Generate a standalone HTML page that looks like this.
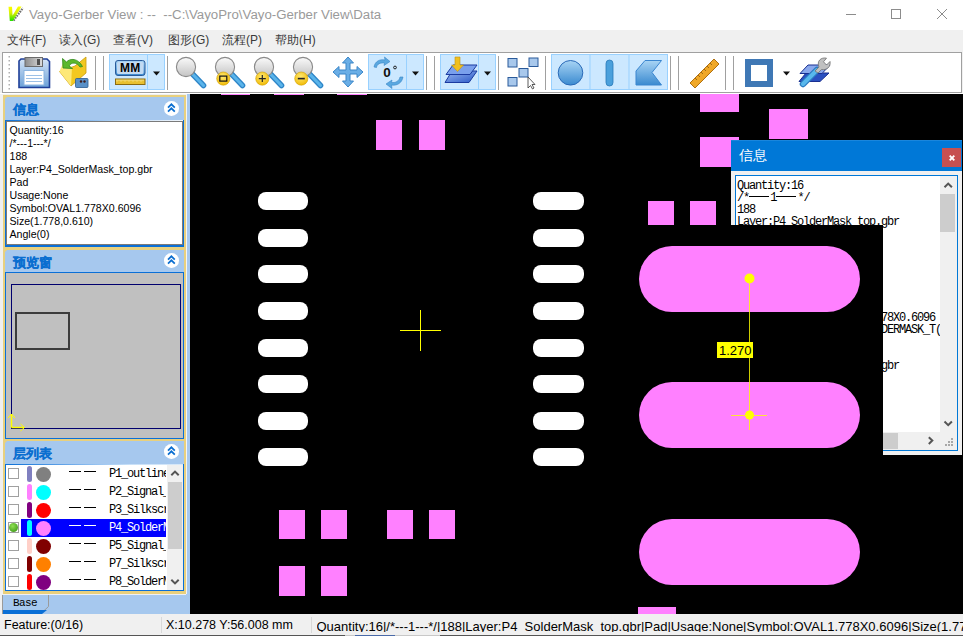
<!DOCTYPE html>
<html><head><meta charset="utf-8">
<style>
*{margin:0;padding:0;box-sizing:border-box}
html,body{width:963px;height:636px;overflow:hidden;background:#f0f0f0;font-family:"Liberation Sans",sans-serif;position:relative}
.a{position:absolute}
#title{left:0;top:0;width:963px;height:30px;background:#fff}
#title .t{left:29px;top:7px;font-size:13.25px;color:#9a9a9a;white-space:pre}
#menu{left:0;top:30px;width:963px;height:21px;background:#f0f0f0}
#menu span{position:absolute;top:2px;font-size:12px;color:#3a3a3a}
#tb{left:2px;top:52px;width:960px;height:41px;background:#fff;border:1px solid #a0a0a0}
#lp{left:0;top:0;width:190px;height:614px}
#canvas{left:190px;top:94px;width:773px;height:520px;background:#000;overflow:hidden}
#status{left:0;top:614px;width:963px;height:22px;background:#f0f0f0}
.pk{position:absolute;background:#ff80ff}
.wo{position:absolute;background:#fff;border-radius:8px;width:51px;height:18px}
.pt{font-family:"Liberation Mono",monospace;font-size:12px;letter-spacing:-1.2px;line-height:12px;color:#000;white-space:pre}
.hd{left:5px;width:179px;background:#a6c8ee;clip-path:polygon(2px 0,100% 0,100% 100%,0 100%,0 2px)}
.hd span{position:absolute;left:7.5px;top:3.5px;font-size:13px;font-weight:bold;color:#0a6ed0;-webkit-text-stroke:0.2px #0a6ed0}
.cb{position:absolute;left:159px;width:14.7px;height:14.7px;border-radius:50%;background:#fff}
.it{font-size:10.6px;line-height:13px;color:#000;white-space:nowrap}
.lt{font-family:"Liberation Mono",monospace;font-size:12px;letter-spacing:-1.2px;line-height:14px;white-space:pre;width:57px;overflow:hidden}
.st{font-size:12.5px;color:#000;white-space:nowrap}
.cap{position:absolute;background:#ff80ff;border-radius:33px;width:221px;height:66px;left:449px}
</style></head><body>
<div id="title" class="a">
  <svg class="a" style="left:4px;top:3px" width="24" height="22" viewBox="4 3 24 22"><defs><linearGradient id="vg" x1="0" y1="0" x2="0" y2="1"><stop offset="0" stop-color="#ffff00"/><stop offset="0.45" stop-color="#d8f000"/><stop offset="1" stop-color="#20e000"/></linearGradient></defs>
<path d="M13.5 20.5 L23 8" stroke="#707070" stroke-width="2.2" stroke-dasharray="1.6 1"/>
<path d="M8.5 6.8 L12 6.8 L12.6 15.5 L18 6.4 L21.5 6.4 L13 21 L9.8 21 Z" fill="url(#vg)"/></svg>
  <div class="a t">Vayo-Gerber View : --  --C:\VayoPro\Vayo-Gerber View\Data</div>
  <svg class="a" style="left:840px;top:4px" width="120" height="22" viewBox="840 4 120 22">
    <g stroke="#8c8c8c" stroke-width="1" fill="none" shape-rendering="crispEdges">
      <line x1="846" y1="14.5" x2="856" y2="14.5"/>
      <rect x="891.5" y="9.5" width="9" height="9"/>
    </g>
    <g stroke="#8c8c8c" stroke-width="1" fill="none">
      <line x1="937" y1="9" x2="947" y2="19"/><line x1="947" y1="9" x2="937" y2="19"/>
    </g>
  </svg>
</div>
<div id="menu" class="a">
  <span style="left:7px">文件(F)</span>
  <span style="left:59px">读入(G)</span>
  <span style="left:113px">查看(V)</span>
  <span style="left:168px">图形(G)</span>
  <span style="left:222px">流程(P)</span>
  <span style="left:275px">帮助(H)</span>
</div>
<div id="tb" class="a"></div>
<svg class="a" style="left:0;top:50px" width="963" height="44" viewBox="0 50 963 44">
<defs>
 <linearGradient id="lens" x1="0" y1="0" x2="0" y2="1"><stop offset="0" stop-color="#fafafa"/><stop offset="1" stop-color="#c4c4c4"/></linearGradient>
 <radialGradient id="badge" cx="0.45" cy="0.35" r="0.7"><stop offset="0" stop-color="#ffe870"/><stop offset="1" stop-color="#f0b800"/></radialGradient>
 <linearGradient id="fl" x1="0" y1="0" x2="0" y2="1"><stop offset="0" stop-color="#d4e4f6"/><stop offset="1" stop-color="#6aa0d8"/></linearGradient>
 <linearGradient id="sh" x1="0" y1="0" x2="1" y2="0"><stop offset="0" stop-color="#8c8c8c"/><stop offset="1" stop-color="#dcdcdc"/></linearGradient>
 <linearGradient id="blu" x1="0" y1="0" x2="0" y2="1"><stop offset="0" stop-color="#a8d4f4"/><stop offset="1" stop-color="#3a8ad0"/></linearGradient>
 <linearGradient id="lay" x1="0" y1="0" x2="1" y2="1"><stop offset="0" stop-color="#9ab8f0"/><stop offset="1" stop-color="#2a58c8"/></linearGradient>
</defs>
<rect x="8.5" y="56" width="1.5" height="1.5" fill="#b0b0b0"/><rect x="8.5" y="60" width="1.5" height="1.5" fill="#b0b0b0"/><rect x="8.5" y="64" width="1.5" height="1.5" fill="#b0b0b0"/><rect x="8.5" y="68" width="1.5" height="1.5" fill="#b0b0b0"/><rect x="8.5" y="72" width="1.5" height="1.5" fill="#b0b0b0"/><rect x="8.5" y="76" width="1.5" height="1.5" fill="#b0b0b0"/><rect x="8.5" y="80" width="1.5" height="1.5" fill="#b0b0b0"/><rect x="8.5" y="84" width="1.5" height="1.5" fill="#b0b0b0"/><rect x="8.5" y="88" width="1.5" height="1.5" fill="#b0b0b0"/>
<!-- floppy -->
<path d="M21 59 H47 L49.5 61.5 V87.5 H19 V61 Z" fill="url(#fl)" stroke="#1f3f98" stroke-width="1.6"/>
<rect x="25" y="57.5" width="17.5" height="9" fill="url(#sh)" stroke="#6a6a6a" stroke-width="1"/>
<rect x="37" y="59" width="3" height="6" fill="#505050"/>
<rect x="24" y="70.5" width="20" height="14.5" fill="#fff" stroke="#8ab4e0" stroke-width="1"/>
<path d="M26 75.5 H42 M26 78.5 H42 M26 81.5 H42" stroke="#9cc0e6" stroke-width="1"/>
<!-- folder -->
<path d="M59.5 71.5 L71 86 L86 73 V57 L75 66 Z" fill="#f3c820" stroke="#c89a10" stroke-width="0.8"/>
<path d="M59.5 71.5 L71 86 L72 67 L63 63 Z" fill="#fde878"/>
<path d="M62.5 58.5 L63 68 L72.5 68.5 L69 66 C71 62 77 62 80 67 L82.5 66.5 C78 58 70 58 66.5 62 Z" fill="#5cb82c" stroke="#2e8a1a" stroke-width="0.8"/>
<rect x="75.5" y="78.5" width="12.5" height="9" rx="1" fill="#5890c8" stroke="#2a5a90" stroke-width="0.8"/>
<circle cx="81" cy="81.5" r="1.2" fill="#402020"/><circle cx="84.5" cy="81.5" r="1.2" fill="#402020"/>
<line x1="95.5" y1="56" x2="95.5" y2="90" stroke="#a0a0a0" stroke-width="1"/><line x1="103.5" y1="56" x2="103.5" y2="90" stroke="#a0a0a0" stroke-width="1"/><line x1="167.5" y1="56" x2="167.5" y2="90" stroke="#a0a0a0" stroke-width="1"/><line x1="426.5" y1="56" x2="426.5" y2="90" stroke="#a0a0a0" stroke-width="1"/><line x1="434.5" y1="56" x2="434.5" y2="90" stroke="#a0a0a0" stroke-width="1"/><line x1="498.5" y1="56" x2="498.5" y2="90" stroke="#a0a0a0" stroke-width="1"/><line x1="545.5" y1="56" x2="545.5" y2="90" stroke="#a0a0a0" stroke-width="1"/><line x1="670.5" y1="56" x2="670.5" y2="90" stroke="#a0a0a0" stroke-width="1"/><line x1="678.5" y1="56" x2="678.5" y2="90" stroke="#a0a0a0" stroke-width="1"/><line x1="725.5" y1="56" x2="725.5" y2="90" stroke="#a0a0a0" stroke-width="1"/><line x1="733.5" y1="56" x2="733.5" y2="90" stroke="#a0a0a0" stroke-width="1"/>
<!-- MM button -->
<rect x="109.5" y="54.5" width="55" height="35" fill="#cce8ff" stroke="#99d1ff" stroke-width="1"/><line x1="147.5" y1="55" x2="147.5" y2="89" stroke="#99d1ff" stroke-width="1"/>
<rect x="115.5" y="60.5" width="29.5" height="15" rx="2.5" fill="url(#blu)" stroke="#2a5a9a" stroke-width="1"/>
<rect x="117" y="62" width="26.5" height="12" rx="1.5" fill="#c4daf2"/>
<text x="130.2" y="72.2" font-family="Liberation Sans" font-weight="bold" font-size="12" letter-spacing="0.3" text-anchor="middle" fill="#000">MM</text>
<rect x="115.5" y="79" width="29.5" height="5.5" fill="#e8c030" stroke="#8a6a10" stroke-width="1"/>
<path d="M117 79.5 V81.5 M119 79.5 V80.8 M121 79.5 V81.5 M123 79.5 V80.8 M125 79.5 V81.5 M127 79.5 V80.8 M129 79.5 V81.5 M131 79.5 V80.8 M133 79.5 V81.5 M135 79.5 V80.8 M137 79.5 V81.5 M139 79.5 V80.8 M141 79.5 V81.5 M143 79.5 V80.8" stroke="#fff4c0" stroke-width="0.8"/>
<path d="M153 71.5 H160 L156.5 75.5 Z" fill="#111"/>
<!-- magnifiers -->
<path d="M192.5 74 L203.5 85.5" stroke="#2f86c8" stroke-width="5.6" stroke-linecap="round"/>
<path d="M192.5 74 L203.5 85.5" stroke="#5ab4ea" stroke-width="3" stroke-linecap="round"/>
<circle cx="186" cy="67" r="9.6" fill="url(#lens)" stroke="#8a8a8a" stroke-width="1.1"/>
<path d="M231.5 74 L242.5 85.5" stroke="#2f86c8" stroke-width="5.6" stroke-linecap="round"/>
<path d="M231.5 74 L242.5 85.5" stroke="#5ab4ea" stroke-width="3" stroke-linecap="round"/>
<circle cx="225" cy="67" r="9.6" fill="url(#lens)" stroke="#8a8a8a" stroke-width="1.1"/><circle cx="223.3" cy="78.6" r="6.6" fill="url(#badge)" stroke="#d0a000" stroke-width="0.6"/><rect x="219.8" y="76.1" width="7" height="5" fill="none" stroke="#111" stroke-width="1.2"/>
<path d="M270.5 74 L281.5 85.5" stroke="#2f86c8" stroke-width="5.6" stroke-linecap="round"/>
<path d="M270.5 74 L281.5 85.5" stroke="#5ab4ea" stroke-width="3" stroke-linecap="round"/>
<circle cx="264" cy="67" r="9.6" fill="url(#lens)" stroke="#8a8a8a" stroke-width="1.1"/><circle cx="262.3" cy="78.6" r="6.6" fill="url(#badge)" stroke="#d0a000" stroke-width="0.6"/><path d="M258.8 78.6 H265.8 M262.3 75.1 V82.1" stroke="#222" stroke-width="1.2"/>
<path d="M309.5 74 L320.5 85.5" stroke="#2f86c8" stroke-width="5.6" stroke-linecap="round"/>
<path d="M309.5 74 L320.5 85.5" stroke="#5ab4ea" stroke-width="3" stroke-linecap="round"/>
<circle cx="303" cy="67" r="9.6" fill="url(#lens)" stroke="#8a8a8a" stroke-width="1.1"/><circle cx="301.3" cy="78.6" r="6.6" fill="url(#badge)" stroke="#d0a000" stroke-width="0.6"/><path d="M297.8 78.6 H304.8" stroke="#222" stroke-width="1.6"/>
<!-- move -->
<path d="M348.0 57.0 L353.5 63.0 L350.0 63.0 L350.0 70.0 L357.0 70.0 L357.0 66.5 L363.0 72.0 L357.0 77.5 L357.0 74.0 L350.0 74.0 L350.0 81.0 L353.5 81.0 L348.0 87.0 L342.5 81.0 L346.0 81.0 L346.0 74.0 L339.0 74.0 L339.0 77.5 L333.0 72.0 L339.0 66.5 L339.0 70.0 L346.0 70.0 L346.0 63.0 L342.5 63.0 Z" fill="#6aaee6" stroke="#3a86c8" stroke-width="1" stroke-linejoin="round"/>
<!-- rotate -->
<rect x="368.5" y="54.5" width="55" height="35" fill="#cce8ff" stroke="#99d1ff" stroke-width="1"/><line x1="406.5" y1="55" x2="406.5" y2="89" stroke="#99d1ff" stroke-width="1"/>
<path d="M374 67 C375 61 380 59 385 60 L384.5 57 L390 61.5 L384 65.5 L384.5 63 C380 62.5 377 64 376.5 67.5 Z" fill="#5aa8e0" stroke="#3a86c8" stroke-width="0.6"/>
<path d="M403 77 C402 83 397 86 391.5 85 L392 88.5 L386 84 L392 80 L391.5 82.5 C396 83 399 81 400 77 Z" fill="#5aa8e0" stroke="#3a86c8" stroke-width="0.6"/>
<text x="383.2" y="76.8" font-family="Liberation Sans" font-weight="bold" font-size="13.5" fill="#111">0</text>
<circle cx="395" cy="67.5" r="1.4" fill="none" stroke="#111" stroke-width="0.9"/>
<path d="M412 71.5 H419 L415.5 75.5 Z" fill="#111"/>
<!-- layer -->
<rect x="440.5" y="54.5" width="55" height="35" fill="#cce8ff" stroke="#99d1ff" stroke-width="1"/><line x1="478.5" y1="55" x2="478.5" y2="89" stroke="#99d1ff" stroke-width="1"/>
<path d="M452 71 H477 L469 82.5 H445 Z" fill="url(#lay)" stroke="#1a3aa0" stroke-width="1"/>
<path d="M453 65 H477 L470 74.5 H446 Z" fill="#7aa0ec" stroke="#1a3aa0" stroke-width="1"/>
<path d="M455 57 H460 V65 H463.5 L457.5 71.5 L451.5 65 H455 Z" fill="#f0c020" stroke="#c09010" stroke-width="0.6"/>
<path d="M484 71.5 H491 L487.5 75.5 Z" fill="#111"/>
<!-- select -->
<rect x="508" y="58.5" width="9" height="8.5" fill="#a8c8ec" stroke="#2a5a9a" stroke-width="1"/>
<rect x="529" y="58" width="9" height="8.5" fill="#a8c8ec" stroke="#2a5a9a" stroke-width="1"/>
<rect x="519" y="68.5" width="9" height="8.5" fill="#a8c8ec" stroke="#2a5a9a" stroke-width="1"/>
<rect x="508" y="77.5" width="9" height="8.5" fill="#a8c8ec" stroke="#2a5a9a" stroke-width="1"/>
<path d="M528 77 V88 L530.5 85.5 L532.5 89 L534 88 L532 84.5 L535 84.5 Z" fill="#fff" stroke="#333" stroke-width="0.8"/>
<!-- shape buttons -->
<rect x="551.5" y="54.5" width="116" height="35" fill="#cce8ff" stroke="#99d1ff" stroke-width="1"/><line x1="590" y1="55" x2="590" y2="89" stroke="#99d1ff" stroke-width="1"/><line x1="629" y1="55" x2="629" y2="89" stroke="#99d1ff" stroke-width="1"/>
<circle cx="570.5" cy="72.8" r="12.3" fill="url(#blu)" stroke="#2a6ab8" stroke-width="1"/>
<rect x="606" y="60" width="7" height="26" rx="3.5" fill="#4aa0dc" stroke="#2a78b8" stroke-width="0.8"/>
<path d="M645 60.5 H661.5 L652 72.5 L661.5 85 H636 V71 Z" fill="url(#blu)" stroke="#3a86d0" stroke-width="1"/>
<!-- ruler -->
<path d="M690 83 L714 59 L719 64 L695 88 Z" fill="#f0a828" stroke="#b07010" stroke-width="1"/>
<path d="M698 75 L700 77 M701 72 L703 74 M704 69 L706 71 M707 66 L709 68 M710 63 L712 65 M695 78 L697 80" stroke="#8a5a10" stroke-width="0.8"/>
<!-- square -->
<rect x="748" y="62" width="22" height="22" fill="none" stroke="#3f78b5" stroke-width="6"/>
<path d="M783 71.5 H790 L786.5 75.5 Z" fill="#111"/>
<!-- wrench layers -->
<path d="M806 73 H829 L820 81.5 H799 Z" fill="#2a50c0" stroke="#1a3090" stroke-width="1"/>
<path d="M808 65 H830 L822 73.5 H800 Z" fill="#8aa8ec" stroke="#1a3090" stroke-width="1"/>
<path d="M803 84 L817 70" stroke="#2a7ac0" stroke-width="6.5" stroke-linecap="round"/>
<path d="M803 84 L817 70" stroke="#58b8ec" stroke-width="4" stroke-linecap="round"/>
<path d="M815 71 L819 67 C816.5 61 821 57 826.5 58.2 L823.5 61.8 L826.5 65 L830 61.5 C831 67 826.5 70.5 821.5 69.5 L818 73 Z" fill="#c0c0c0" stroke="#7a7a7a" stroke-width="0.9"/>
</svg>
<div class="a" style="left:0;top:93px;width:963px;height:1px;background:#fff"></div>
<div id="lp" class="a">
  <div class="a" style="left:3px;top:95px;width:183px;height:499px;background:#e8d07e"></div>
  <div class="a" style="left:186px;top:94px;width:1px;height:520px;background:#f4f4f4"></div>
  <div class="a" style="left:187px;top:94px;width:3px;height:520px;background:#a6c8ee"></div>
  <!-- info section -->
  <div class="a hd" style="top:97px;height:23px"><span>信息</span><i class="cb" style="top:4px"><svg width="15" height="15" viewBox="0 0 15 15" style="position:absolute;left:0;top:0"><path d="M4 6.6 L7.4 3.3 L10.8 6.6 M4 10.6 L7.4 7.3 L10.8 10.6" stroke="#0a6ed0" stroke-width="1.7" fill="none"/></svg></i></div>
  <div class="a" style="left:5px;top:120px;width:179px;height:127px;background:#0a6fd6"></div>
  <div class="a" style="left:5px;top:120px;width:178px;height:1px;background:linear-gradient(to right,#0a6fd6,#5a9ee6 30%,#c8e0f8 70%,#eef4fb)"></div>
  <div class="a" style="left:6px;top:121px;width:177px;height:124px;background:#fff;border:1px solid #7a7a7a"></div>
  <div class="a it" style="left:9.5px;top:124px">Quantity:16<br>/*---1---*/<br>188<br>Layer:P4_SolderMask_top.gbr<br>Pad<br>Usage:None<br>Symbol:OVAL1.778X0.6096<br>Size(1.778,0.610)<br>Angle(0)</div>
  <!-- preview -->
  <div class="a hd" style="top:250px;height:22px"><span style="top:3.5px">预览窗</span><i class="cb" style="top:3px"><svg width="15" height="15" viewBox="0 0 15 15" style="position:absolute;left:0;top:0"><path d="M4 6.6 L7.4 3.3 L10.8 6.6 M4 10.6 L7.4 7.3 L10.8 10.6" stroke="#0a6ed0" stroke-width="1.7" fill="none"/></svg></i></div>
  <div class="a" style="left:5px;top:272px;width:179px;height:167px;background:#0a6fd6"></div>
  <div class="a" style="left:6px;top:273px;width:177px;height:165px;background:#c0c0c0"></div>
  <div class="a" style="left:11px;top:284px;width:170px;height:145px;border:1.5px solid #00006e"></div>
  <div class="a" style="left:15px;top:312px;width:55px;height:38px;border:2px solid #3c3c3c"></div>
  <svg class="a" style="left:6px;top:410px" width="30" height="25" viewBox="6 410 30 25">
    <path d="M11.5 427.5 V414 M11.5 427.5 H24" stroke="#ffff00" stroke-width="1.5" fill="none"/>
    <path d="M8 418 L11.5 414 L15 418 M20.5 424 L24.5 427.5 L20.5 431" stroke="#ffff00" stroke-width="1" fill="none"/>
  </svg>
  <!-- layer list -->
  <div class="a hd" style="top:441px;height:23px"><span>层列表</span><i class="cb" style="top:3px"><svg width="15" height="15" viewBox="0 0 15 15" style="position:absolute;left:0;top:0"><path d="M4 6.6 L7.4 3.3 L10.8 6.6 M4 10.6 L7.4 7.3 L10.8 10.6" stroke="#0a6ed0" stroke-width="1.7" fill="none"/></svg></i></div>
  <div class="a" style="left:5px;top:464px;width:179px;height:127px;background:#0a6fd6"></div>
  <div class="a" style="left:6px;top:465px;width:177px;height:125px;background:#fff"></div>
  <div class="a" style="left:5px;top:464px;width:178px;height:1px;background:linear-gradient(to right,#0a6fd6,#5a9ee6 30%,#c8e0f8 70%,#d8e8f8)"></div>
  <div class="a" style="left:21px;top:519px;width:145px;height:18px;background:#0000ff"></div>
  <div class="a" style="left:8px;top:468px;width:11px;height:11px;border:1px solid #a0a0a0;background:#fff"></div>
  <div class="a" style="left:27px;top:466px;width:5px;height:16px;border-radius:2.5px;background:#8080c0"></div>
  <div class="a" style="left:36px;top:467px;width:15px;height:15px;border-radius:50%;background:#808080"></div>
  <div class="a" style="left:69px;top:471px;width:12px;height:1px;background:#000"></div><div class="a" style="left:84px;top:471px;width:12px;height:1px;background:#000"></div>
  <div class="a lt" style="left:109px;top:467px;color:#000">P1_outline</div>
  <div class="a" style="left:8px;top:486px;width:11px;height:11px;border:1px solid #a0a0a0;background:#fff"></div>
  <div class="a" style="left:27px;top:484px;width:5px;height:16px;border-radius:2.5px;background:#ff80ff"></div>
  <div class="a" style="left:36px;top:485px;width:15px;height:15px;border-radius:50%;background:#00ffff"></div>
  <div class="a" style="left:69px;top:489px;width:12px;height:1px;background:#000"></div><div class="a" style="left:84px;top:489px;width:12px;height:1px;background:#000"></div>
  <div class="a lt" style="left:109px;top:485px;color:#000">P2_Signal_</div>
  <div class="a" style="left:8px;top:504px;width:11px;height:11px;border:1px solid #a0a0a0;background:#fff"></div>
  <div class="a" style="left:27px;top:502px;width:5px;height:16px;border-radius:2.5px;background:#800080"></div>
  <div class="a" style="left:36px;top:503px;width:15px;height:15px;border-radius:50%;background:#ff0000"></div>
  <div class="a" style="left:69px;top:507px;width:12px;height:1px;background:#000"></div><div class="a" style="left:84px;top:507px;width:12px;height:1px;background:#000"></div>
  <div class="a lt" style="left:109px;top:503px;color:#000">P3_Silkscr</div>
  <div class="a" style="left:8px;top:522px;width:11px;height:11px;border:1px solid #a0a0a0;background:#fff"></div><div class="a" style="left:9px;top:523px;width:9px;height:9px;border-radius:50%;background:radial-gradient(circle at 40% 35%,#8fe050,#2f8a10)"></div>
  <div class="a" style="left:27px;top:520px;width:5px;height:16px;border-radius:2.5px;background:#00ffff"></div>
  <div class="a" style="left:36px;top:521px;width:15px;height:15px;border-radius:50%;background:#ff80ff"></div>
  <div class="a" style="left:69px;top:525px;width:12px;height:1px;background:#fff"></div><div class="a" style="left:84px;top:525px;width:12px;height:1px;background:#fff"></div>
  <div class="a lt" style="left:109px;top:521px;color:#fff">P4_SolderM</div>
  <div class="a" style="left:8px;top:540px;width:11px;height:11px;border:1px solid #a0a0a0;background:#fff"></div>
  <div class="a" style="left:27px;top:538px;width:5px;height:16px;border-radius:2.5px;background:#ffd0c8"></div>
  <div class="a" style="left:36px;top:539px;width:15px;height:15px;border-radius:50%;background:#800000"></div>
  <div class="a" style="left:69px;top:543px;width:12px;height:1px;background:#000"></div><div class="a" style="left:84px;top:543px;width:12px;height:1px;background:#000"></div>
  <div class="a lt" style="left:109px;top:539px;color:#000">P5_Signal_</div>
  <div class="a" style="left:8px;top:558px;width:11px;height:11px;border:1px solid #a0a0a0;background:#fff"></div>
  <div class="a" style="left:27px;top:556px;width:5px;height:16px;border-radius:2.5px;background:#800000"></div>
  <div class="a" style="left:36px;top:557px;width:15px;height:15px;border-radius:50%;background:#ff8000"></div>
  <div class="a" style="left:69px;top:561px;width:12px;height:1px;background:#000"></div><div class="a" style="left:84px;top:561px;width:12px;height:1px;background:#000"></div>
  <div class="a lt" style="left:109px;top:557px;color:#000">P7_Silkscr</div>
  <div class="a" style="left:8px;top:576px;width:11px;height:11px;border:1px solid #a0a0a0;background:#fff"></div>
  <div class="a" style="left:27px;top:574px;width:5px;height:16px;border-radius:2.5px;background:#ff0000"></div>
  <div class="a" style="left:36px;top:575px;width:15px;height:15px;border-radius:50%;background:#800080"></div>
  <div class="a" style="left:69px;top:579px;width:12px;height:1px;background:#000"></div><div class="a" style="left:84px;top:579px;width:12px;height:1px;background:#000"></div>
  <div class="a lt" style="left:109px;top:575px;color:#000">P8_SolderM</div>
  <div class="a" style="left:167px;top:465px;width:16px;height:125px;background:#f0f0f0"></div>
  <div class="a" style="left:168px;top:482px;width:14px;height:67px;background:#cdcdcd"></div>
  <svg class="a" style="left:169px;top:469px" width="12" height="8" viewBox="0 0 12 8"><path d="M2.3 6.3 L6 2.6 L9.7 6.3" stroke="#555" stroke-width="2" fill="none"/></svg>
  <svg class="a" style="left:169px;top:578px" width="12" height="8" viewBox="0 0 12 8"><path d="M2.3 1.7 L6 5.4 L9.7 1.7" stroke="#555" stroke-width="2" fill="none"/></svg>
  <!-- tab area -->
  <div class="a" style="left:0;top:594px;width:187px;height:20px;background:#a6c8ee"></div>
  <div class="a" style="left:3px;top:594px;width:183px;height:1px;background:#eef0f4"></div>
  <div class="a" style="left:0;top:594px;width:3px;height:20px;background:#f0f0f0"></div>
  <svg class="a" style="left:2px;top:595px" width="48" height="19" viewBox="0 1 48 19">
    <path d="M0.5 20 V1 M46.5 1 V12.5 L39 19.5" stroke="#9a9a9a" stroke-width="1" fill="none"/>
    <path d="M1 16 H45 L40 20 H1 Z" fill="#0a6fd6"/>
  </svg>
  <div class="a" style="left:13px;top:597px;font-family:'Liberation Mono',monospace;font-size:11px;letter-spacing:-0.6px;color:#000">Base</div>
</div>

<div id="canvas" class="a">
  <div class="pk" style="left:31px;top:0;width:29px;height:1px"></div>
  <div class="pk" style="left:84px;top:0;width:30px;height:1px"></div>
  <div class="pk" style="left:147px;top:0;width:30px;height:1px"></div>
  <div class="pk" style="left:186px;top:26px;width:26px;height:30px"></div>
  <div class="pk" style="left:229px;top:26px;width:26px;height:30px"></div>
  <div class="pk" style="left:510px;top:0;width:39px;height:18px"></div>
  <div class="pk" style="left:579px;top:15px;width:39px;height:30px"></div>
  <div class="pk" style="left:510px;top:43px;width:39px;height:30px"></div>
  <div class="pk" style="left:458px;top:107px;width:26px;height:24px"></div>
  <div class="pk" style="left:500px;top:107px;width:26px;height:24px"></div>
  <div class="wo" style="width:50px;left:68px;top:98px"></div>
  <div class="wo" style="width:50px;left:68px;top:135px"></div>
  <div class="wo" style="width:50px;left:68px;top:171px"></div>
  <div class="wo" style="width:50px;left:68px;top:208px"></div>
  <div class="wo" style="width:50px;left:68px;top:245px"></div>
  <div class="wo" style="width:50px;left:68px;top:281px"></div>
  <div class="wo" style="width:50px;left:68px;top:318px"></div>
  <div class="wo" style="width:50px;left:68px;top:354px"></div>
  <div class="wo" style="left:343px;top:98px"></div>
  <div class="wo" style="left:343px;top:135px"></div>
  <div class="wo" style="left:343px;top:171px"></div>
  <div class="wo" style="left:343px;top:208px"></div>
  <div class="wo" style="left:343px;top:245px"></div>
  <div class="wo" style="left:343px;top:281px"></div>
  <div class="wo" style="left:343px;top:318px"></div>
  <div class="wo" style="left:343px;top:354px"></div>
  <div class="cap" style="top:152px"></div>
  <div class="cap" style="top:288px"></div>
  <div class="cap" style="top:425px"></div>
  <div class="pk" style="left:89px;top:416px;width:26px;height:29px"></div>
  <div class="pk" style="left:131px;top:416px;width:26px;height:29px"></div>
  <div class="pk" style="left:197px;top:416px;width:26px;height:29px"></div>
  <div class="pk" style="left:239px;top:416px;width:26px;height:29px"></div>
  <div class="pk" style="left:89px;top:472px;width:26px;height:30px"></div>
  <div class="pk" style="left:131px;top:472px;width:26px;height:30px"></div>
  <div class="pk" style="left:448px;top:513px;width:38px;height:7px"></div>
  <svg class="a" style="left:0;top:0" width="773" height="520">
    <g stroke="#ffff00" stroke-width="1" shape-rendering="crispEdges">
      <line x1="210" y1="236.5" x2="251" y2="236.5"/>
      <line x1="230.5" y1="216" x2="230.5" y2="257"/>
    </g>
    <g stroke="rgba(255,255,0,0.8)" stroke-width="1" shape-rendering="crispEdges">
      <line x1="559.5" y1="184" x2="559.5" y2="336"/>
      <line x1="541" y1="321.5" x2="559" y2="321.5"/>
      <line x1="560" y1="321.5" x2="577" y2="321.5"/>
    </g>
    <circle cx="559.5" cy="184.5" r="5" fill="#ffff00"/>
    <circle cx="559.5" cy="321" r="4.5" fill="#ffff00"/>
    <rect x="527" y="248" width="36" height="16" fill="#ffff00"/>
    <text x="529" y="261" font-family="Liberation Sans" font-size="13" fill="#000">1.270</text>
  </svg>
</div>
<div id="popup" class="a" style="left:731px;top:140px;width:231px;height:315px;background:#f0f0f0;clip-path:polygon(0 0,231px 0,231px 315px,152px 315px,152px 85px,0 85px)">
  <div class="a" style="left:0;top:0;width:231px;height:31px;background:#0078d7;border-top:1px solid #1a86dc"></div>
  <div class="a" style="left:8px;top:7px;font-size:14px;color:#fff">信息</div>
  <div class="a" style="left:211px;top:8px;width:19px;height:19px;background:#c75050"></div>
  <svg class="a" style="left:217.5px;top:14.5px" width="6" height="6" viewBox="0 0 6 6"><path d="M0.7 0.7 L5.3 5.3 M5.3 0.7 L0.7 5.3" stroke="#fff" stroke-width="1.9"/></svg>
  <div class="a" style="left:4px;top:35px;width:223px;height:276px;border:1px solid #0078d7;background:#fff"></div>
  <div class="a pt" style="left:6px;top:40px">Quantity:16
/*<span style="display:inline-block;width:20px;height:1px;background:#000;vertical-align:4px;margin-right:1.2px"></span>1<span style="display:inline-block;width:20px;height:1px;background:#000;vertical-align:4px;margin-right:1.2px"></span>*/
188
Layer:P4_SolderMask_top.gbr







Symbol:OVAL1.778X0.6096 78X0.6096
SMD:P4_SOLDERMASK_TOP   DERMASK_T(


Layer:P4_SolderMask_top.gbr</div>
  <div class="a" style="left:209px;top:36px;width:17px;height:256px;background:#f0f0f0"></div>
  <div class="a" style="left:209px;top:54px;width:15px;height:38px;background:#cdcdcd"></div>
  <svg class="a" style="left:211px;top:41px" width="13" height="8" viewBox="0 0 13 8"><path d="M2.5 6.3 L6.2 2.6 L9.9 6.3" stroke="#555" stroke-width="2" fill="none"/></svg>
  <svg class="a" style="left:211px;top:280px" width="13" height="8" viewBox="0 0 13 8"><path d="M2.5 1.5 L6.2 5.2 L9.9 1.5" stroke="#555" stroke-width="2" fill="none"/></svg>
  <div class="a" style="left:5px;top:292px;width:221px;height:18px;background:#f0f0f0"></div>
  <svg class="a" style="left:213px;top:298px" width="10" height="10" viewBox="0 0 10 10" fill="#a8a8a8"><rect x="7" y="0" width="2" height="2"/><rect x="4" y="3" width="2" height="2"/><rect x="7" y="3" width="2" height="2"/><rect x="1" y="6" width="2" height="2"/><rect x="4" y="6" width="2" height="2"/><rect x="7" y="6" width="2" height="2"/></svg>
  <div class="a" style="left:152px;top:293px;width:15px;height:16px;background:#cdcdcd"></div>
  <svg class="a" style="left:196px;top:296px" width="8" height="11" viewBox="0 0 8 11"><path d="M1.8 1.3 L5.3 4.6 L1.8 7.9" stroke="#555" stroke-width="2" fill="none"/></svg>
</div>
<div id="status" class="a">
  <div class="a" style="left:161px;top:3px;width:1px;height:16px;background:#d8d8d8"></div>
  <div class="a" style="left:311px;top:3px;width:1px;height:16px;background:#d8d8d8"></div>
  <div class="a st" style="left:4px;top:4px">Feature:(0/16)</div>
  <div class="a st" style="left:166px;top:4px">X:10.278 Y:56.008 mm</div>
  <div class="a st" style="left:316.5px;top:5px;font-size:13px;height:13px;overflow:hidden;line-height:15px">Quantity:16|/*---1---*/|188|Layer:P4_SolderMask_top.gbr|Pad|Usage:None|Symbol:OVAL1.778X0.6096|Size(1.778,0.610)</div>
  <div class="a" style="left:0;top:21px;width:963px;height:1px;background:#555"></div>
  <div class="a" style="left:345px;top:21px;width:95px;height:1px;background:#c8c8c8"></div>
  <div class="a" style="left:355px;top:21px;width:40px;height:1px;background:#4a6aa8"></div>
</div>

</body></html>
